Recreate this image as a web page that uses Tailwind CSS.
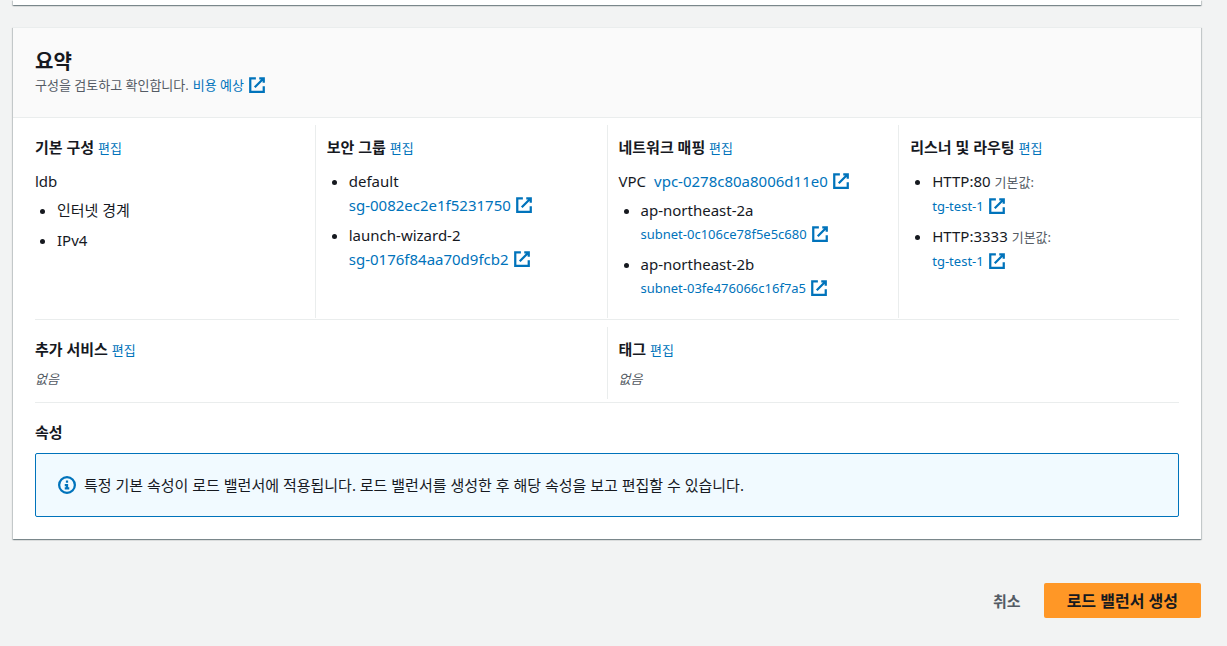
<!DOCTYPE html>
<html lang="ko">
<head>
    <meta charset="UTF-8">
    <meta name="viewport" content="width=device-width, initial-scale=1.0">
    <title>로드 밸런서 생성</title>
    <script src="https://cdn.jsdelivr.net/npm/@tailwindcss/browser@4"></script>
</head>
<body class="bg-[#f2f3f3] min-h-screen pl-[13px] pr-[26px] font-['Noto_Sans','Noto_Sans_CJK_KR',sans-serif] text-[15px] leading-6 text-[#16191f]">

    <!-- Shared icons -->
    <svg class="hidden">
        <symbol id="external" viewBox="0 0 16 16">
            <path d="M10 2h4v4M6 10l8-8M14 9.048V14H2V2h5" fill="none" stroke="currentColor" stroke-width="2" />
        </symbol>
        <symbol id="info" viewBox="0 0 16 16">
            <circle cx="8" cy="8" r="7" fill="none" stroke="currentColor" stroke-width="2" />
            <path d="M8 11V8H6M10 11H6" fill="none" stroke="currentColor" stroke-width="2" />
            <path d="M8 6V4" fill="none" stroke="currentColor" stroke-width="2" />
        </symbol>
    </svg>

    <!-- Previous section -->
    <section class="h-[5px] bg-white shadow-[0_1px_1px_0_rgba(0,28,36,0.3),1px_1px_1px_0_rgba(0,28,36,0.15),-1px_1px_1px_0_rgba(0,28,36,0.15)]"></section>

    <!-- Summary -->
    <section class="mt-[22px] bg-white border-t border-[#eaeded] shadow-[0_1px_1px_0_rgba(0,28,36,0.3),1px_1px_1px_0_rgba(0,28,36,0.15),-1px_1px_1px_0_rgba(0,28,36,0.15)]">
        <header class="bg-[#fafafa] border-b border-[#eaeded] px-[22px] pt-[22px] pb-[21px]">
            <h2 class="text-xl leading-6 font-bold">요약</h2>
            <p class="flex items-center gap-1 text-[13px] leading-[22px] text-[#545b64]">
                구성을 검토하고 확인합니다.
                <a href="#" class="flex items-center gap-1 text-[#0073bb] hover:underline">비용 예상 <svg class="size-[18px]"><use href="#external" /></svg></a>
            </p>
        </header>

        <div class="px-[22px] pb-[22px]">

            <div class="border-b border-[#eaeded] pt-[7px] pb-px">
                <div class="-ml-3 -mr-[11px] grid grid-cols-4">
                    <div class="pl-3 pr-[11px] pt-[10px] pb-[18px]">
                        <h3 class="font-bold">기본 구성 <a href="#" class="text-[13px] font-normal text-[#0073bb] hover:underline">편집</a></h3>
                        <p class="mt-[9px]">ldb</p>
                        <ul class="mt-[5px] list-disc pl-[22px] space-y-[6px]">
                            <li>인터넷 경계</li>
                            <li>IPv4</li>
                        </ul>
                    </div>

                    <div class="border-l border-[#eaeded] px-[11px] pt-[10px] pb-[18px]">
                        <h3 class="font-bold">보안 그룹 <a href="#" class="text-[13px] font-normal text-[#0073bb] hover:underline">편집</a></h3>
                        <ul class="mt-[9px] list-disc pl-[22px] space-y-[6px]">
                            <li>default
                                <a href="#" class="flex items-center gap-1 text-[#0073bb] hover:underline">sg-0082ec2e1f5231750 <svg class="size-[18px]"><use href="#external" /></svg></a>
                            </li>
                            <li>launch-wizard-2
                                <a href="#" class="flex items-center gap-1 text-[#0073bb] hover:underline">sg-0176f84aa70d9fcb2 <svg class="size-[18px]"><use href="#external" /></svg></a>
                            </li>
                        </ul>
                    </div>

                    <div class="border-l border-[#eaeded] px-[11px] pt-[10px] pb-[18px]">
                        <h3 class="font-bold">네트워크 매핑 <a href="#" class="text-[13px] font-normal text-[#0073bb] hover:underline">편집</a></h3>
                        <p class="mt-[9px] flex gap-2">VPC
                            <a href="#" class="flex items-center gap-1 text-[#0073bb] hover:underline">vpc-0278c80a8006d11e0 <svg class="size-[18px]"><use href="#external" /></svg></a>
                        </p>
                        <ul class="mt-[5px] list-disc pl-[22px] space-y-[6px]">
                            <li>ap-northeast-2a
                                <a href="#" class="flex items-center gap-1 text-[13px] text-[#0073bb] hover:underline">subnet-0c106ce78f5e5c680 <svg class="size-[18px]"><use href="#external" /></svg></a>
                            </li>
                            <li>ap-northeast-2b
                                <a href="#" class="flex items-center gap-1 text-[13px] text-[#0073bb] hover:underline">subnet-03fe476066c16f7a5 <svg class="size-[18px]"><use href="#external" /></svg></a>
                            </li>
                        </ul>
                    </div>

                    <div class="border-l border-[#eaeded] px-[11px] pt-[10px] pb-[18px]">
                        <h3 class="font-bold">리스너 및 라우팅 <a href="#" class="text-[13px] font-normal text-[#0073bb] hover:underline">편집</a></h3>
                        <ul class="mt-[9px] list-disc pl-[22px] space-y-[6px]">
                            <li>HTTP:80 <span class="text-[13px] text-[#545b64]">기본값:</span>
                                <a href="#" class="flex items-center gap-1 text-[13px] text-[#0073bb] hover:underline">tg-test-1 <svg class="size-[18px]"><use href="#external" /></svg></a>
                            </li>
                            <li>HTTP:3333 <span class="text-[13px] text-[#545b64]">기본값:</span>
                                <a href="#" class="flex items-center gap-1 text-[13px] text-[#0073bb] hover:underline">tg-test-1 <svg class="size-[18px]"><use href="#external" /></svg></a>
                            </li>
                        </ul>
                    </div>
                </div>
            </div>

            <div class="border-b border-[#eaeded] pt-[7px] pb-[3px]">
                <div class="-ml-3 -mr-[11px] grid grid-cols-2">
                    <div class="pl-3 pr-[11px] pt-[10px] pb-2">
                        <h3 class="font-bold">추가 서비스 <a href="#" class="text-[13px] font-normal text-[#0073bb] hover:underline">편집</a></h3>
                        <p class="mt-[5px] text-[13px] italic text-[#545b64]">없음</p>
                    </div>
                    <div class="border-l border-[#eaeded] px-[11px] pt-[10px] pb-2">
                        <h3 class="font-bold">태그 <a href="#" class="text-[13px] font-normal text-[#0073bb] hover:underline">편집</a></h3>
                        <p class="mt-[5px] text-[13px] italic text-[#545b64]">없음</p>
                    </div>
                </div>
            </div>

            <h3 class="mt-[17px] font-bold">속성</h3>
            <div class="mt-[9px] flex items-center gap-2 rounded-xs border border-[#0073bb] bg-[#f1faff] px-[22px] py-[19px]">
                <svg class="size-[18px] shrink-0 text-[#0073bb]"><use href="#info" /></svg>
                <p>특정 기본 속성이 로드 밸런서에 적용됩니다. 로드 밸런서를 생성한 후 해당 속성을 보고 편집할 수 있습니다.</p>
            </div>
        </div>
    </section>

    <!-- Actions -->
    <div class="mt-11 flex justify-end">
        <button type="button" class="px-[23px] font-bold text-[#545b64] hover:text-[#16191f]">취소</button>
        <button type="button" class="h-[35px] rounded-xs bg-[#ff9726] px-[23px] text-base font-bold hover:bg-[#ec7211]">로드 밸런서 생성</button>
    </div>

</body>
</html>
